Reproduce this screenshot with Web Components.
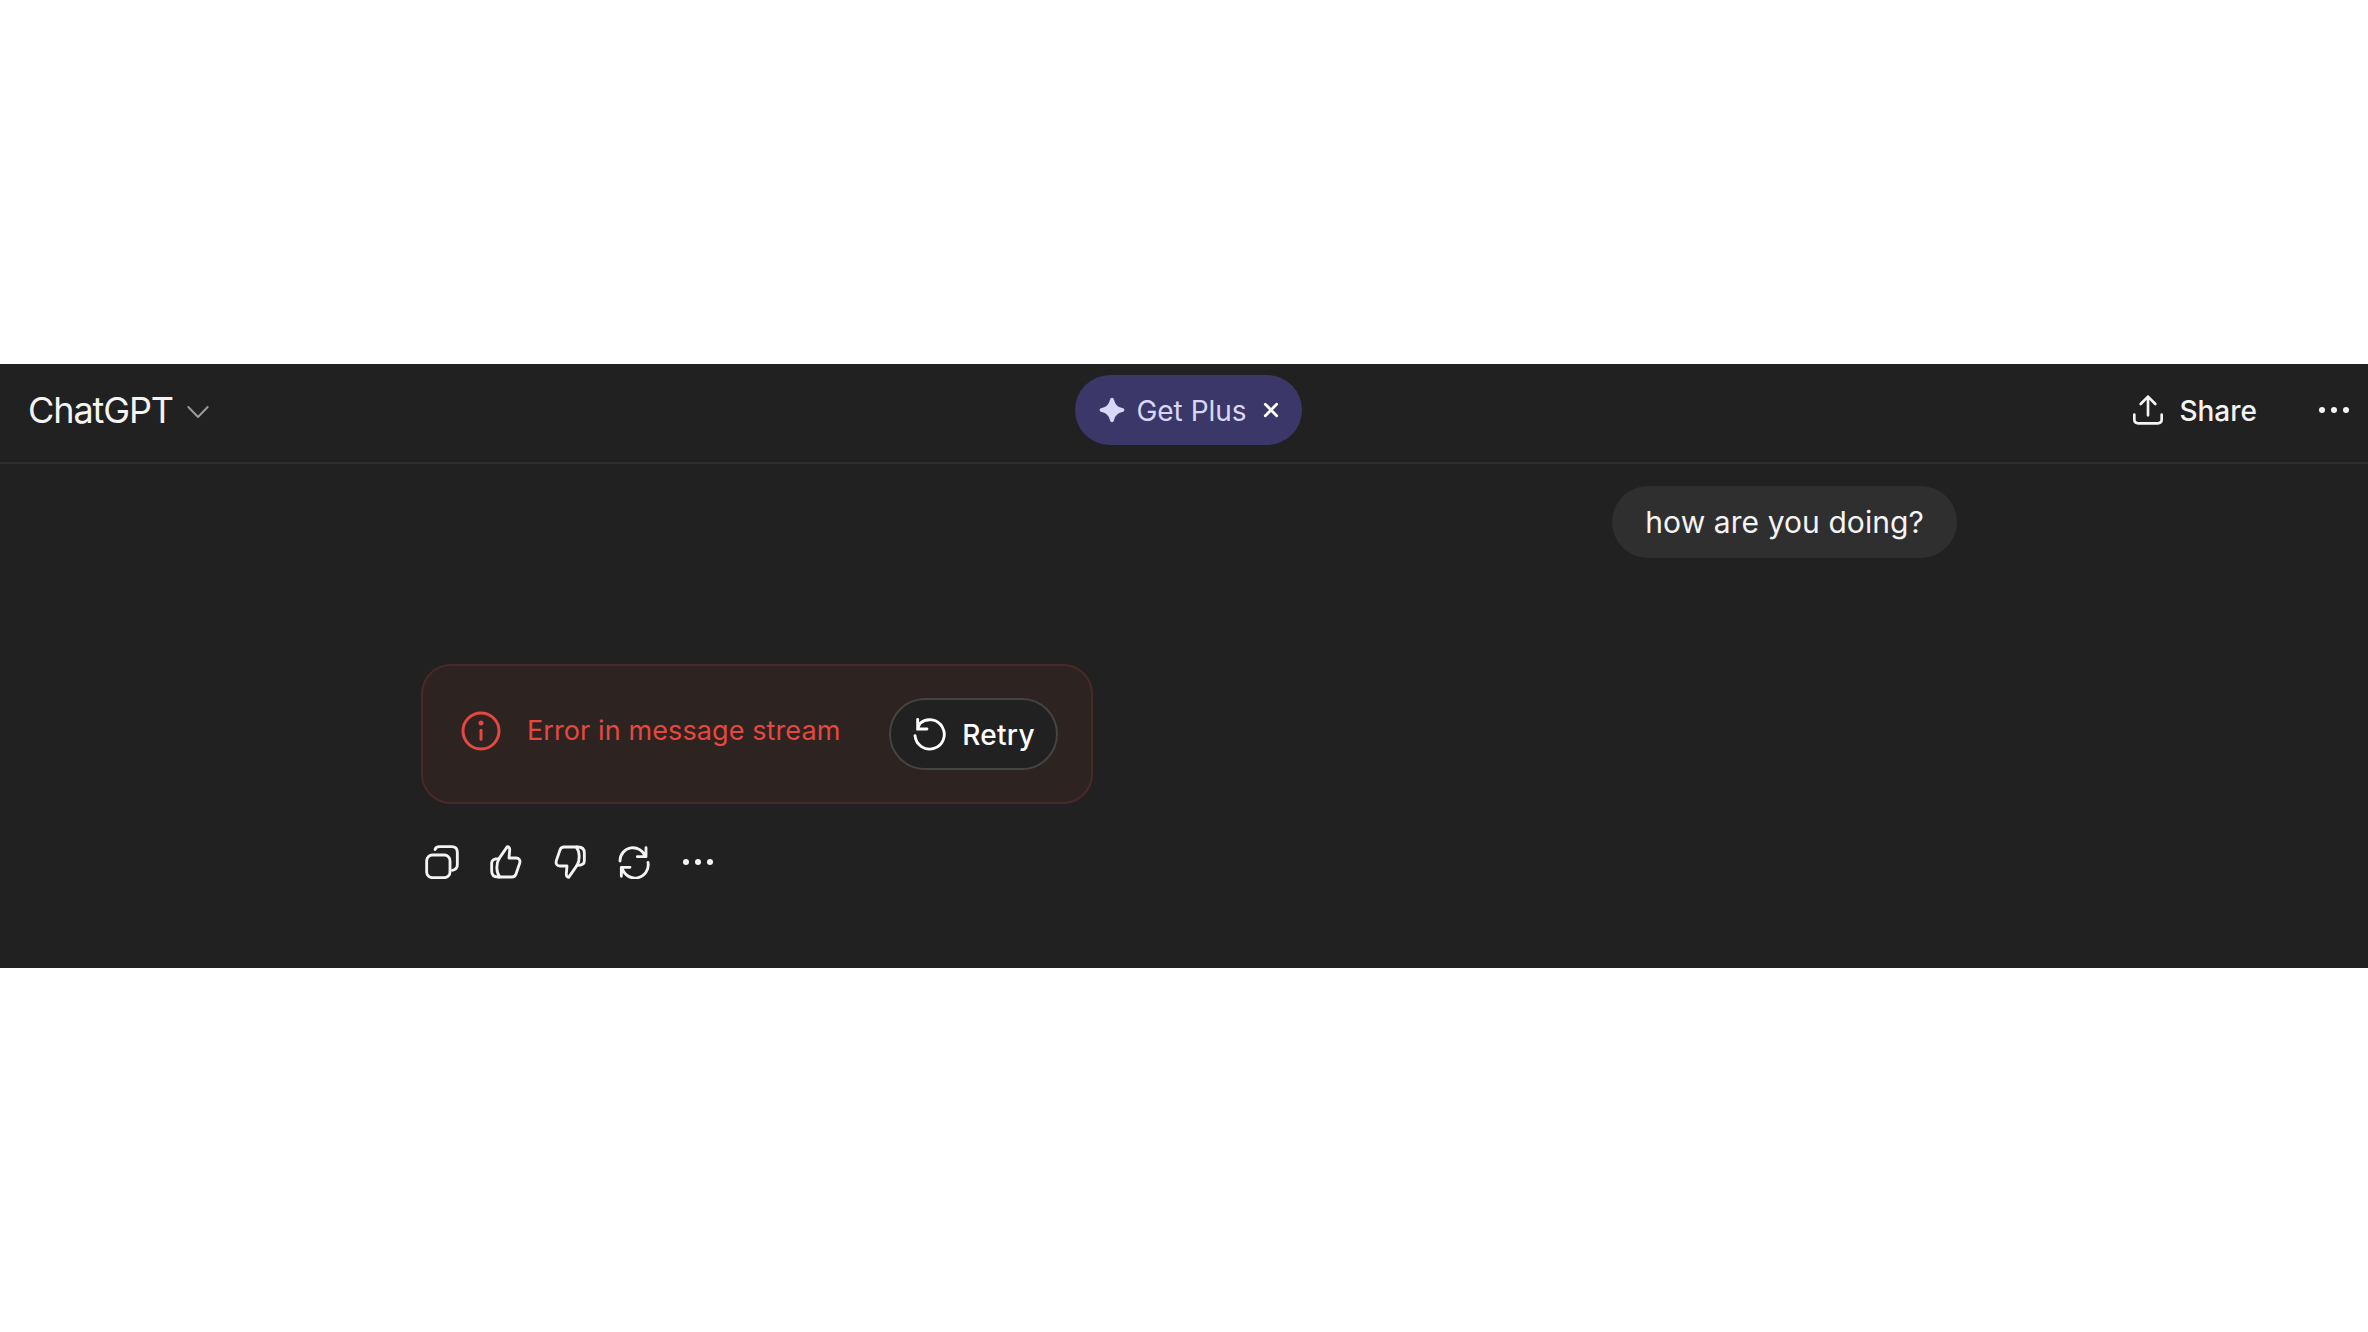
<!DOCTYPE html>
<html>
<head>
<meta charset="utf-8">
<title>ChatGPT</title>
<style>
  html, body { margin: 0; background: #fff; }
  body { font-family: Inter, "Noto Sans", sans-serif; color: #fff; padding: 364px 0 364px; }
</style>
</head>
<body>
<chat-page>
  <chat-header></chat-header>
  <user-bubble>how are you doing?</user-bubble>
  <error-card>Error in message stream</error-card>
  <action-row></action-row>
</chat-page>

<script>
// icons are drawn in the coordinates of a 3x crop, so width = w/3
const ICONS = {
  chevron: { w: 72, h: 48, color: '#9b9b9b', sw: 6, d: '<path d="M7 9 L36 39 L65 9"/>' },
  sparkle: { w: 78, h: 78, fill: true, d: '<path d="M39 2 C42 2 44 4 45 8 C48 21 56 30 70 33 C74 34 76 36 76 39 C76 42 74 44 70 45 C56 48 48 57 45 70 C44 74 42 76 39 76 C36 76 34 74 33 70 C30 57 22 48 8 45 C4 44 2 42 2 39 C2 36 4 34 8 33 C22 30 30 21 33 8 C34 4 36 2 39 2Z"/>' },
  close: { w: 48, h: 48, sw: 8.5, d: '<path d="M7 7 L41 41 M41 7 L7 41"/>' },
  share: { w: 96, h: 96, sw: 8, d: '<path d="M48 8 V64 M26 30 L48 8 L70 30 M7 62 V76 Q7 88 19 88 H77 Q89 88 89 76 V62"/>' },
  dots: { w: 90, h: 30, fill: true, d: '<circle cx="9" cy="15" r="9"/><circle cx="45" cy="15" r="9"/><circle cx="81" cy="15" r="9"/>' },
  info: { w: 120, h: 120, sw: 9, d: '<circle cx="60" cy="60" r="54"/><path d="M60 58 V85"/><circle cx="60" cy="36" r="7.5" fill="currentColor" stroke="none"/>' },
  retry: { w: 102, h: 102, sw: 8.5, d: '<path d="M6 56 A44 44 0 1 0 21 19 L14 34 M14 7 V36 H42" stroke-linejoin="miter"/>' },
  copy: { w: 102, h: 102, sw: 8.5, d: '<path d="M30 14 Q32 5 44 5 H80 Q97 5 97 22 V60 Q97 73 82 76"/><rect x="5" y="30" width="70" height="68" rx="17"/>' },
  up: { w: 96, h: 102, sw: 8.5, d: '<path d="M52 5 C57 5 60 10 59 17 L57 39 H78 C87 39 92 46 89 55 L78 87 C76 93 72 96 66 96 H24 C12 96 5 90 5 78 V54 C5 46 12 41 27 41 Z"/><path d="M27 41 C18 55 18 82 29 96"/>' },
  down: { w: 96, h: 102, sw: 8.5, d: '<g transform="rotate(180 48 51)"><path d="M52 5 C57 5 60 10 59 17 L57 39 H78 C87 39 92 46 89 55 L78 87 C76 93 72 96 66 96 H24 C12 96 5 90 5 78 V54 C5 46 12 41 27 41 Z"/><path d="M27 41 C18 55 18 82 29 96"/></g>' },
  refresh: { w: 96, h: 102, sw: 8.5, d: '<path d="M6 48 A39 39 0 0 1 82 35 M84 8 V35 H58 M90 52 A39 39 0 0 1 12 67 M10 94 V67 H36"/>' }
};

class UiIcon extends HTMLElement {
  connectedCallback() {
    const icon = ICONS[this.getAttribute('name')];
    const paint = icon.fill
      ? 'fill="currentColor"'
      : `fill="none" stroke="currentColor" stroke-width="${icon.sw}" stroke-linecap="round" stroke-linejoin="round"`;
    this.attachShadow({ mode: 'open' }).innerHTML = `
      <style>
        :host { display: block; flex: none; line-height: 0; ${icon.color ? 'color:' + icon.color + ';' : ''} }
        svg { display: block; }
      </style>
      <svg width="${icon.w / 3}" height="${icon.h / 3}" viewBox="0 0 ${icon.w} ${icon.h}" ${paint}>${icon.d}</svg>`;
  }
}

class ChatPage extends HTMLElement {
  connectedCallback() {
    this.attachShadow({ mode: 'open' }).innerHTML = `
      <style>
        :host { display: block; height: 604px; background: #212121; }
        .thread { display: flex; flex-direction: column; padding: 0 411px 0 421px; }
      </style>
      <slot name="top"></slot>
      <div class="thread"><slot></slot></div>`;
    this.querySelector('chat-header').slot = 'top';
  }
}

class ChatHeader extends HTMLElement {
  connectedCallback() {
    this.attachShadow({ mode: 'open' }).innerHTML = `
      <style>
        :host {
          display: grid;
          grid-template-columns: 1fr auto 1fr;
          align-items: center;
          height: 92px;
          padding: 0 19px 6px 28px;
          border-bottom: 2px solid #2d2d2d;
        }
        .model { display: flex; align-items: center; gap: 13px; font-size: 36px; color: #f4f4f4; letter-spacing: -1.1px; }
        .model ui-icon { margin-top: 4px; }
        .pill {
          display: flex; align-items: center;
          height: 70px; padding: 0 23px 0 24px;
          border-radius: 35px;
          background: #3b3768; color: #d9d7f7;
          font-size: 28px;
        }
        .pill .label { margin: 2px 16px 0 11px; }
        .pill .close { color: #fff; }
        .right { display: flex; align-items: center; justify-content: flex-end; color: #f4f4f4; }
        .share { display: flex; align-items: center; gap: 15px; font-size: 28px; font-weight: 450; margin-right: 62px; }
        .share span { margin-top: 2px; }
      </style>
      <div class="model">ChatGPT <ui-icon name="chevron"></ui-icon></div>
      <div class="pill">
        <ui-icon name="sparkle"></ui-icon>
        <span class="label">Get Plus</span>
        <ui-icon class="close" name="close"></ui-icon>
      </div>
      <div class="right">
        <div class="share"><ui-icon name="share"></ui-icon><span>Share</span></div>
        <ui-icon name="dots"></ui-icon>
      </div>`;
  }
}

class UserBubble extends HTMLElement {
  connectedCallback() {
    this.attachShadow({ mode: 'open' }).innerHTML = `
      <style>
        :host {
          display: block; align-self: flex-end;
          margin-top: 22px;
          height: 72px; line-height: 72px;
          padding: 0 33px;
          border-radius: 36px;
          background: #2f2f2f; color: #f4f4f4;
          font-size: 30px; letter-spacing: 0.08px;
        }
      </style>
      <slot></slot>`;
  }
}

class RetryButton extends HTMLElement {
  connectedCallback() {
    this.attachShadow({ mode: 'open' }).innerHTML = `
      <style>
        :host {
          display: flex; align-items: center; justify-content: center; gap: 15px;
          box-sizing: border-box;
          flex: none; width: 169px; height: 72px;
          border: 2px solid #444;
          border-radius: 36px;
          background: #212121; color: #fff;
          font-size: 28px; font-weight: 450; letter-spacing: 0.3px;
        }
        ui-icon { margin-left: 1px; }
        span { margin-top: 2px; }
      </style>
      <ui-icon name="retry"></ui-icon><span>Retry</span>`;
  }
}

class ErrorCard extends HTMLElement {
  connectedCallback() {
    this.attachShadow({ mode: 'open' }).innerHTML = `
      <style>
        :host {
          display: flex; align-items: center;
          box-sizing: border-box;
          align-self: flex-start;
          width: 672px; height: 140px;
          margin-top: 106px;
          padding: 0 33px 0 38px;
          border: 2px solid #4a2a29;
          border-radius: 30px;
          background: #2d2321; color: #e5483f;
          font-size: 27px;
        }
        .msg { display: flex; align-items: center; gap: 26px; flex: 1; margin-top: -7px; letter-spacing: 0.1px; }
        .msg span { margin-top: -1px; }
      </style>
      <div class="msg"><ui-icon name="info"></ui-icon><span><slot></slot></span></div>
      <retry-button></retry-button>`;
  }
}

class ActionRow extends HTMLElement {
  connectedCallback() {
    this.attachShadow({ mode: 'open' }).innerHTML = `
      <style>
        :host { display: flex; align-items: center; margin-top: 40px; padding-left: 4px; color: #f4f4f4; }
        .cell { width: 64px; height: 36px; display: flex; align-items: center; justify-content: center; }
        .row { display: flex; margin-left: -15px; }
      </style>
      <div class="row">
        <div class="cell"><ui-icon name="copy"></ui-icon></div>
        <div class="cell"><ui-icon name="up"></ui-icon></div>
        <div class="cell"><ui-icon name="down"></ui-icon></div>
        <div class="cell"><ui-icon name="refresh"></ui-icon></div>
        <div class="cell"><ui-icon name="dots"></ui-icon></div>
      </div>`;
  }
}

customElements.define('ui-icon', UiIcon);
customElements.define('chat-page', ChatPage);
customElements.define('chat-header', ChatHeader);
customElements.define('user-bubble', UserBubble);
customElements.define('retry-button', RetryButton);
customElements.define('error-card', ErrorCard);
customElements.define('action-row', ActionRow);
</script>
</body>
</html>
